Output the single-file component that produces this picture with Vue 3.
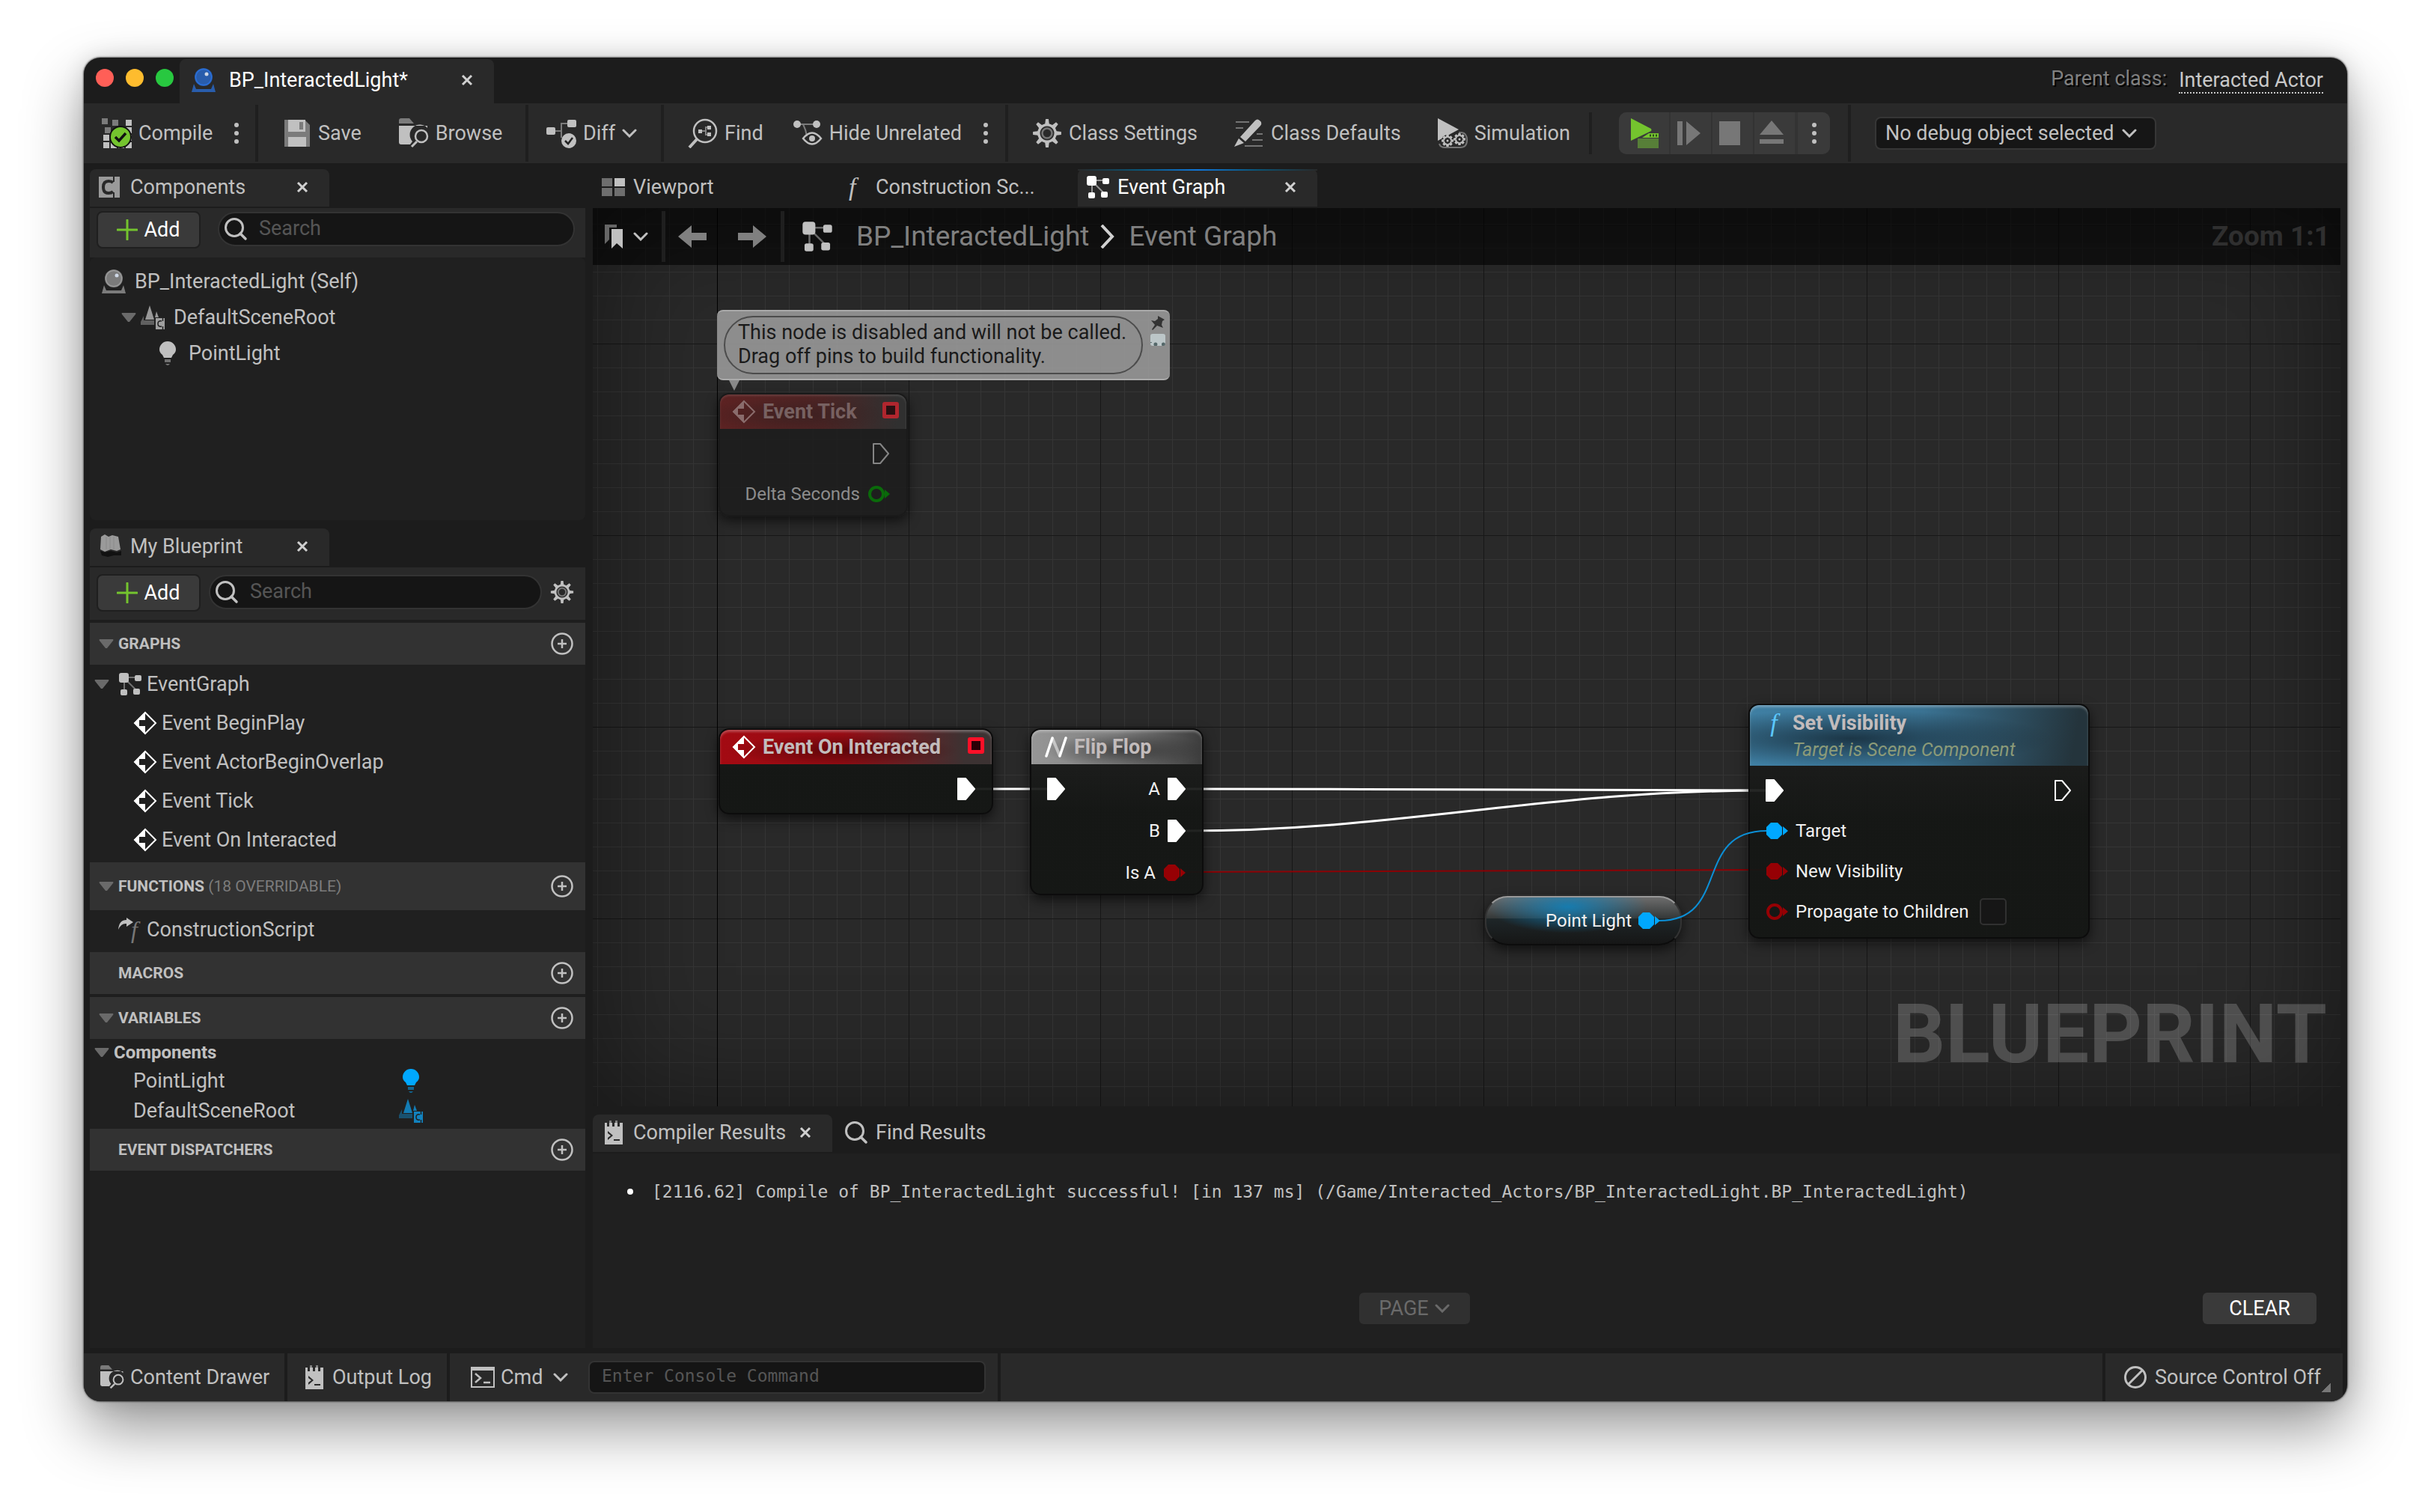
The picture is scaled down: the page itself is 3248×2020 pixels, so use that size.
<script setup>
import { ref } from 'vue'

const gear = (cx, cy, outer, inner, teeth) => {
  const step = (Math.PI * 2) / teeth
  const at = (r, a) => `${(cx + r * Math.sin(a)).toFixed(2)} ${(cy - r * Math.cos(a)).toFixed(2)}`
  let d = ''
  for (let i = 0; i < teeth; i++) {
    const a = i * step
    d += `${i ? 'L' : 'M'}${at(inner, a - step * 0.27)}L${at(outer, a - step * 0.13)}L${at(outer, a + step * 0.13)}L${at(inner, a + step * 0.27)}`
  }
  return d + 'Z'
}
const bigGear = gear(20, 20, 19, 13, 8)
const miniGear = gear(0, 0, 7, 5, 8)

const events = ['Event BeginPlay', 'Event ActorBeginOverlap', 'Event Tick', 'Event On Interacted']
const variables = [
  { name: 'PointLight', icon: 'bulb', tone: 'bright' },
  { name: 'DefaultSceneRoot', icon: 'scene', tone: 'deep' },
]
const propagate = ref(false)
const message =
  '[2116.62] Compile of BP_InteractedLight successful! [in 137 ms] (/Game/Interacted_Actors/BP_InteractedLight.BP_InteractedLight)'
</script>

<template>
  <div class="desktop">
    <svg class="defs" aria-hidden="true">
      <symbol id="actor" viewBox="0 0 32 32">
        <path d="M3 21 0 32H32L29 21L26 28H6Z" opacity=".75" />
        <circle cx="16" cy="12" r="12" opacity=".75" />
        <circle cx="16" cy="12" r="10.5" fill="none" stroke="currentColor" stroke-width="1.5" />
        <circle cx="20" cy="8" r="2.5" class="spark" />
      </symbol>
      <symbol id="close" viewBox="0 0 16 16">
        <path d="M2 2 14 14M14 2 2 14" fill="none" stroke="currentColor" stroke-width="3" />
      </symbol>
      <symbol id="chevron" viewBox="0 0 20 12">
        <path d="M2 2 10 10 18 2" fill="none" stroke="currentColor" stroke-width="3" stroke-linecap="round" />
      </symbol>
      <symbol id="dots" viewBox="0 0 8 32">
        <circle cx="4" cy="5" r="3" /><circle cx="4" cy="16" r="3" /><circle cx="4" cy="27" r="3" />
      </symbol>
      <symbol id="compile" viewBox="0 0 40 40">
        <path d="M0 0h8v8H0zM14 2h8v8h-8zM4 12h8v8H4z" opacity=".55" />
        <path d="M32 2h8v8h-8zM32 12h8v8h-8zM2 22h8v8H2zM2 32h8v8H2zM12 32h8v8h-8zM22 32h8v8h-8zM32 32h8v8h-8zM32 22h8v8h-8z" />
        <circle cx="25" cy="25" r="14" fill="#74c42e" stroke="#111" stroke-width="2" />
        <path d="M18 25 23 30 32 20" fill="none" stroke="#111" stroke-width="3.5" />
      </symbol>
      <symbol id="save" viewBox="0 0 40 40">
        <path d="M4 2H31L38 9V38H4Z" opacity=".55" />
        <path fill-rule="evenodd" d="M9 2H32V18H9ZM24 5V15H29V5Z" />
        <path d="M9 25H33V38H9Z" />
      </symbol>
      <symbol id="browse" viewBox="0 0 40 40">
        <path d="M0 7V3Q0 0 3 0H14L20 7Z" opacity=".55" />
        <path d="M0 10H38V13A13 13 0 0 0 18 31L15 35H3Q0 35 0 32Z" />
        <circle cx="30" cy="24" r="8" fill="none" stroke="currentColor" stroke-width="2.5" />
        <path d="M24 31 17 38" stroke="currentColor" stroke-width="3" />
      </symbol>
      <symbol id="diff" viewBox="0 0 40 40">
        <path d="M10 17H20M30 7H20V26" fill="none" stroke="currentColor" stroke-width="2" opacity=".55" />
        <rect y="12" width="12" height="10" rx="2" /><rect x="28" y="2" width="12" height="10" rx="2" />
        <circle cx="30" cy="30" r="10" />
        <path d="M25 30 29 34 35 26" fill="none" stroke="#222" stroke-width="2.5" />
      </symbol>
      <symbol id="findnode" viewBox="0 0 40 40">
        <circle cx="23" cy="17" r="15" fill="none" stroke="currentColor" stroke-width="2.5" />
        <path d="M13 27 2 39" stroke="currentColor" stroke-width="4" />
        <path d="M18 17H24M30 12H24V22H30" fill="none" stroke="currentColor" stroke-width="2" opacity=".6" />
        <path d="M14 15h5v5h-5zM26 10h5v5h-5zM26 19h5v5h-5z" />
      </symbol>
      <symbol id="hide" viewBox="0 0 40 40">
        <path d="M6 8H32M14 8Q18 16 19 24" fill="none" stroke="currentColor" stroke-width="2" opacity=".55" />
        <circle cx="6" cy="8" r="5" /><circle cx="32" cy="8" r="5" />
        <path d="M14 27Q26 12 38 27Q26 42 14 27Z" fill="none" stroke="currentColor" stroke-width="2.5" />
        <circle cx="26" cy="27" r="4" />
      </symbol>
      <symbol id="gear" viewBox="0 0 40 40">
        <path fill-rule="evenodd" :d="bigGear + 'M20 10.5a9.5 9.5 0 1 0 .01 0Z'" />
        <circle cx="20" cy="20" r="6.5" fill="none" stroke="currentColor" stroke-width="2.5" opacity=".5" />
      </symbol>
      <symbol id="defaults" viewBox="0 0 40 40">
        <path d="M2 5H20M2 13H12M30 21H38M24 29H38M14 37H38" fill="none" stroke="currentColor" stroke-width="2" opacity=".5" />
        <path d="M28 3Q31 0 34 3L36 5Q37 8 35 10L15 31L8 25Z" />
        <path d="M6 27 13 33 0 38Z" />
      </symbol>
      <symbol id="simulate" viewBox="0 0 40 40">
        <path d="M0 0 28 15 0 30Z" />
        <path d="M28 19H32Q39 20 39 29Q39 39 30 39H10Q3 39 2 34" fill="none" stroke="currentColor" stroke-width="2" opacity=".5" />
        <circle cx="13" cy="30" r="8" fill="#292929" /><circle cx="29" cy="28" r="8" fill="#292929" />
        <g fill="none" stroke="currentColor" stroke-width="2">
          <path :d="miniGear" transform="translate(13 30)" /><path :d="miniGear" transform="translate(29 28)" />
        </g>
        <circle cx="13" cy="30" r="1.5" /><circle cx="29" cy="28" r="1.5" />
      </symbol>
      <symbol id="play" viewBox="0 0 40 40">
        <path d="M11 27H39V40H11Z" fill="#577f38" />
        <path d="M17 26 26 20H39V26Z" fill="#74c42e" />
        <path d="M27 23H37" stroke="#2c4a1a" stroke-width="3" stroke-dasharray="2 2" />
        <path d="M2 0 29 14 Q30 16 29 17L2 30Z" fill="#74c42e" />
      </symbol>
      <symbol id="skip" viewBox="0 0 40 40"><path d="M6 4h7v32H6zM18 4 37 20 18 36Z" /></symbol>
      <symbol id="stop" viewBox="0 0 40 40"><path d="M6 4h28v32H6z" /></symbol>
      <symbol id="eject" viewBox="0 0 40 40"><path d="M20 3 36 22H4ZM4 28h32v6H4z" /></symbol>
      <symbol id="comp" viewBox="0 0 28 28">
        <path fill-rule="evenodd" opacity=".75" d="M0 0H28V28H0ZM19 0V7H21V0ZM19 21V28H21V21Z" />
        <path d="M19 8Q17 6 13 6Q6 6 6 14T13 22Q17 22 19 20" fill="none" stroke="#292929" stroke-width="4" />
      </symbol>
      <symbol id="plus" viewBox="0 0 28 28">
        <path d="M14 1V27M1 14H27" stroke="currentColor" stroke-width="3" stroke-linecap="round" />
      </symbol>
      <symbol id="search" viewBox="0 0 32 32">
        <circle cx="14" cy="14" r="11.5" fill="none" stroke="currentColor" stroke-width="3" />
        <path d="M22 22 29 29" stroke="currentColor" stroke-width="3.5" stroke-linecap="round" />
      </symbol>
      <symbol id="arrow" viewBox="0 0 20 12"><path d="M1 0H19Q20 1 19 2L11 12H9L1 2Q0 1 1 0Z" /></symbol>
      <symbol id="scene" viewBox="0 0 32 32">
        <path d="M12 0 18 19H6ZM21 8 24 16H19Z" opacity=".75" />
        <path d="M4 14V20H18V26H0V22Z" opacity=".4" />
        <path d="M20 17H32V32H20Z" opacity=".8" />
        <path d="M28 21Q23 20 23 24.500T28 28M29.500 17V21M29.500 28V32" fill="none" stroke="#202020" stroke-width="1.5" />
      </symbol>
      <symbol id="bulb" viewBox="0 0 32 32">
        <path d="M16 0a11 11 0 0 1 11 11q0 4-4 7l-2 4H11l-2-4q-4-3-4-7A11 11 0 0 1 16 0Z" />
        <path d="M12 24H20V28H12ZM13 30H19L17 32H15Z" opacity=".5" />
      </symbol>
      <symbol id="book" viewBox="0 0 32 32">
        <path d="M3 3 8 0 13 3 18 1 26 3 29 20 24 22 16 20 8 23 2 20Z" opacity=".75" />
        <path d="M10 3V20M15 3V20M20 3V20" stroke="#8a8a8a" stroke-width="1" />
        <path d="M2 22 8 24 16 22 24 24 30 22V28H20L12 30L4 28Z" fill="#111" />
      </symbol>
      <symbol id="graph" viewBox="0 0 32 32">
        <path d="M8 7H26M8 10V27M10 10 25 25" fill="none" stroke="currentColor" stroke-width="2" opacity=".5" />
        <rect x="1" y="1" width="13" height="13" rx="3" /><rect x="22" y="4" width="9" height="8" rx="2" />
        <rect x="3" y="23" width="9" height="8" rx="2" /><rect x="20" y="22" width="9" height="8" rx="2" />
      </symbol>
      <symbol id="event" viewBox="0 0 32 32">
        <path d="M16 2 30 16 16 30 2 16Z" fill="none" stroke="currentColor" stroke-width="2" />
        <path d="M16 1V12H8V20H16V31L1 16Z" />
      </symbol>
      <symbol id="circleplus" viewBox="0 0 32 32">
        <circle cx="16" cy="16" r="13.5" fill="none" stroke="currentColor" stroke-width="2.5" />
        <path d="M16 10V22M10 16H22" stroke="currentColor" stroke-width="2.5" />
      </symbol>
      <symbol id="redo" viewBox="0 0 20 16">
        <path d="M0 16Q1 3 11 3V0L20 6 11 12V8Q4 7 0 16Z" />
      </symbol>
      <symbol id="tiles" viewBox="0 0 32 24">
        <path d="M0 0h14v11H0zM0 13h14v11H0zM17 13h14v11H17z" opacity=".5" /><path d="M17 0h14v11H17z" />
      </symbol>
      <symbol id="marks" viewBox="0 0 24 32">
        <path d="M0 0H16V4H6V20L0 26Z" opacity=".5" /><path d="M9 6H24V32L16 25 9 32Z" />
      </symbol>
      <symbol id="back" viewBox="0 0 40 32"><path d="M0 16 18 1V11H38V21H18V31Z" /></symbol>
      <symbol id="log" viewBox="0 0 32 32">
        <path fill-rule="evenodd" d="M4 3H7V8H10V3H14V8H17V3H21V8H24V3H28V32H4ZM8 14V17L12 20 8 23V26L15 20ZM16 25V27H24V25Z" />
        <path d="M10 0h3v6h-3zM18 0h3v6h-3z" opacity=".6" />
      </symbol>
      <symbol id="term" viewBox="0 0 32 28">
        <path fill-rule="evenodd" d="M0 0H32V28H0ZM2 5V26H30V5Z" />
        <path d="M6 9 13 15 6 21M17 21H26" fill="none" stroke="currentColor" stroke-width="2.5" />
      </symbol>
      <symbol id="off" viewBox="0 0 32 32">
        <circle cx="16" cy="16" r="13.5" fill="none" stroke="currentColor" stroke-width="3" />
        <path d="M7 25 25 7" stroke="currentColor" stroke-width="3" />
      </symbol>
      <symbol id="exec" viewBox="0 0 24 30">
        <path d="M1 1H11L23 15 11 29H1Z" stroke="currentColor" stroke-width="2" stroke-linejoin="round" />
      </symbol>
      <symbol id="execopen" viewBox="0 0 24 30">
        <path d="M2 2H11L22 15 11 28H2Z" fill="none" stroke="currentColor" stroke-width="2" stroke-linejoin="round" />
      </symbol>
      <symbol id="pin" viewBox="0 0 30 24">
        <path d="M7 1H16L22 7V17L16 23H7L1 17V7Z" /><path d="M23 6 30 12 23 18Z" />
      </symbol>
      <symbol id="pinopen" viewBox="0 0 30 24">
        <circle cx="12" cy="12" r="9" fill="none" stroke="currentColor" stroke-width="4" /><path d="M23 6 30 12 23 18Z" />
      </symbol>
      <symbol id="flip" viewBox="0 0 30 28">
        <path d="M10 2 20 26" stroke="currentColor" stroke-width="4" opacity=".5" />
        <path d="M10 2 2 26M28 2 20 26" stroke="currentColor" stroke-width="3.5" stroke-linecap="round" />
      </symbol>
      <symbol id="tack" viewBox="0 0 20 20">
        <path d="M10 0 19 5 16 7 15 12 17 16 9 13 3 19 2 18 6 12 1 6 6 7 10 4Z" />
      </symbol>
    </svg>

    <main class="window">
      <header class="titlebar">
        <div class="lights">
          <button class="light red" aria-label="Close window"></button>
          <button class="light amber" aria-label="Minimise window"></button>
          <button class="light green" aria-label="Zoom window"></button>
        </div>
        <div class="doctab">
          <svg class="i32 actor-blue"><use href="#actor" /></svg>
          <span class="grow">BP_InteractedLight*</span>
          <button class="x" aria-label="Close BP_InteractedLight"><svg><use href="#close" /></svg></button>
        </div>
        <p class="parent"><span>Parent class:</span><a href="#">Interacted Actor</a></p>
      </header>

      <nav class="toolbar" aria-label="Blueprint">
        <div class="group g1">
          <button class="tool"><svg class="i40"><use href="#compile" /></svg>Compile</button>
          <button class="more" aria-label="Compile options"><svg class="dots"><use href="#dots" /></svg></button>
        </div>
        <div class="group g2">
          <button class="tool"><svg class="i40"><use href="#save" /></svg>Save</button>
          <button class="tool"><svg class="i40"><use href="#browse" /></svg>Browse</button>
        </div>
        <div class="group g3">
          <button class="tool"><svg class="i40"><use href="#diff" /></svg>Diff<svg class="chev"><use href="#chevron" /></svg></button>
        </div>
        <div class="group g4">
          <button class="tool"><svg class="i40"><use href="#findnode" /></svg>Find</button>
          <button class="tool"><svg class="i40"><use href="#hide" /></svg>Hide Unrelated</button>
          <button class="more" aria-label="Hide options"><svg class="dots"><use href="#dots" /></svg></button>
        </div>
        <div class="group g5">
          <button class="tool"><svg class="i40"><use href="#gear" /></svg>Class Settings</button>
          <button class="tool"><svg class="i40"><use href="#defaults" /></svg>Class Defaults</button>
          <button class="tool"><svg class="i40"><use href="#simulate" /></svg>Simulation</button>
        </div>
        <div class="group g6">
          <div class="player">
            <button class="wide" aria-label="Play"><svg class="i40"><use href="#play" /></svg></button>
            <button aria-label="Skip"><svg class="i40"><use href="#skip" /></svg></button>
            <button aria-label="Stop"><svg class="i40"><use href="#stop" /></svg></button>
            <button aria-label="Eject"><svg class="i40"><use href="#eject" /></svg></button>
            <button class="last" aria-label="Play options"><svg class="dots"><use href="#dots" /></svg></button>
          </div>
        </div>
        <div class="debug">
          <select aria-label="Debug object"><option>No debug object selected</option></select>
          <svg class="chev"><use href="#chevron" /></svg>
        </div>
      </nav>

      <div class="workspace">
        <aside class="side">
          <section class="dock components">
            <div class="tabs">
              <div class="tab on"><svg class="i28"><use href="#comp" /></svg><span class="grow">Components</span>
                <button class="x" aria-label="Close Components"><svg><use href="#close" /></svg></button></div>
            </div>
            <div class="bar short">
              <button class="add"><svg><use href="#plus" /></svg>Add</button>
              <label class="find indented"><svg><use href="#search" /></svg><input type="search" placeholder="Search" aria-label="Search components" /></label>
            </div>
            <ul class="tree">
              <li><svg class="i32 dim"><use href="#actor" /></svg>BP_InteractedLight (Self)</li>
              <li class="l1"><svg class="tri"><use href="#arrow" /></svg><svg class="i32"><use href="#scene" /></svg>DefaultSceneRoot</li>
              <li class="l2"><svg class="i32"><use href="#bulb" /></svg>PointLight</li>
            </ul>
          </section>

          <section class="dock blueprint">
            <div class="tabs">
              <div class="tab on"><svg class="i32"><use href="#book" /></svg><span class="grow">My Blueprint</span>
                <button class="x" aria-label="Close My Blueprint"><svg><use href="#close" /></svg></button></div>
            </div>
            <div class="bar tall">
              <button class="add"><svg><use href="#plus" /></svg>Add</button>
              <label class="find"><svg><use href="#search" /></svg><input type="search" placeholder="Search" aria-label="Search blueprint" /></label>
              <button class="round" aria-label="Settings"><svg class="i32"><use href="#gear" /></svg></button>
            </div>
            <div class="lists">
              <h2><svg class="tri"><use href="#arrow" /></svg>GRAPHS<button class="round" aria-label="Add graph"><svg class="i32"><use href="#circleplus" /></svg></button></h2>
              <ul class="rows">
                <li class="parentrow"><svg class="tri"><use href="#arrow" /></svg><svg class="i32"><use href="#graph" /></svg>EventGraph</li>
                <li v-for="e in events" :key="e" class="child"><svg class="i32 white"><use href="#event" /></svg>{{ e }}</li>
              </ul>
              <h2 class="high"><svg class="tri"><use href="#arrow" /></svg>FUNCTIONS <small>(18 OVERRIDABLE)</small><button class="round" aria-label="Add function"><svg class="i32"><use href="#circleplus" /></svg></button></h2>
              <ul class="rows">
                <li class="script"><span class="ovr"><svg><use href="#redo" /></svg><i>f</i></span>ConstructionScript</li>
              </ul>
              <h2 class="split"><span class="tri"></span>MACROS<button class="round" aria-label="Add macro"><svg class="i32"><use href="#circleplus" /></svg></button></h2>
              <h2><svg class="tri"><use href="#arrow" /></svg>VARIABLES<button class="round" aria-label="Add variable"><svg class="i32"><use href="#circleplus" /></svg></button></h2>
              <ul class="vars">
                <li class="cat"><svg class="tri"><use href="#arrow" /></svg>Components</li>
                <li v-for="v in variables" :key="v.name"><span class="vname">{{ v.name }}</span><svg class="i32" :class="v.tone"><use :href="'#' + v.icon" /></svg></li>
              </ul>
              <h2><span class="tri"></span>EVENT DISPATCHERS<button class="round" aria-label="Add dispatcher"><svg class="i32"><use href="#circleplus" /></svg></button></h2>
            </div>
          </section>
        </aside>

        <div class="center">
          <section class="dock editor">
            <div class="tabs">
              <div class="tab"><svg class="tiles"><use href="#tiles" /></svg><span>Viewport</span></div>
              <div class="tab"><i class="fx">f</i><span>Construction Sc...</span></div>
              <div class="tab on active"><svg class="i32"><use href="#graph" /></svg><span class="grow">Event Graph</span>
                <button class="x" aria-label="Close Event Graph"><svg><use href="#close" /></svg></button></div>
            </div>
            <div class="canvas">
              <div class="origin"></div>
              <div class="vignette"></div>
              <div class="crumbs">
                <button class="marks" aria-label="Bookmarks"><svg class="mk"><use href="#marks" /></svg><svg class="chev"><use href="#chevron" /></svg></button>
                <div class="history">
                  <button aria-label="Back"><svg><use href="#back" /></svg></button>
                  <button aria-label="Forward"><svg class="mirror"><use href="#back" /></svg></button>
                </div>
                <svg class="gicon"><use href="#graph" /></svg>
                <a href="#">BP_InteractedLight</a>
                <svg class="gt" viewBox="0 0 24 32"><path d="M4 1 18 16 4 31" fill="none" stroke="currentColor" stroke-width="4" /></svg>
                <span class="grow">Event Graph</span>
                <strong>Zoom 1:1</strong>
              </div>
              <div class="watermark">BLUEPRINT</div>

              <svg class="wires" aria-hidden="true">
                <g fill="none" stroke="#fff" stroke-width="3">
                  <path d="M510 776H608" />
                  <path d="M792 776C1050 776 1300 778 1568 778" />
                  <path d="M792 832C1080 832 1270 778 1568 778" />
                </g>
                <path d="M790 887 1568 884" stroke="#8b0004" stroke-width="2" />
              </svg>

              <div class="bubble"><p>This node is disabled and will not be called.<br />Drag off pins to build functionality.</p>
                <div class="tools"><svg><use href="#tack" /></svg><span></span></div></div>

              <article class="node tick">
                <h3><svg class="i32"><use href="#event" /></svg>Event Tick<i class="sq"></i></h3>
                <div class="pins"><div class="row end"><svg class="exec"><use href="#execopen" /></svg></div>
                  <div class="row end">Delta Seconds<svg class="pin grn"><use href="#pinopen" /></svg></div></div>
              </article>

              <article class="node interacted">
                <h3><svg class="i32"><use href="#event" /></svg>Event On Interacted<i class="sq"></i></h3>
                <div class="pins"><div class="row end"><svg class="exec"><use href="#exec" /></svg></div></div>
              </article>

              <article class="node flipflop">
                <h3><svg class="flip"><use href="#flip" /></svg>Flip Flop</h3>
                <div class="pins">
                  <div class="row"><svg class="exec"><use href="#exec" /></svg><span class="grow"></span>A<svg class="exec"><use href="#exec" /></svg></div>
                  <div class="row end">B<svg class="exec"><use href="#exec" /></svg></div>
                  <div class="row end">Is A<svg class="pin rd"><use href="#pin" /></svg></div>
                </div>
              </article>

              <article class="node visibility">
                <h3><i class="fx">f</i><span>Set Visibility<em>Target is Scene Component</em></span></h3>
                <div class="pins">
                  <div class="row"><svg class="exec"><use href="#exec" /></svg><span class="grow"></span><svg class="exec"><use href="#execopen" /></svg></div>
                  <div class="row"><svg class="pin bl"><use href="#pin" /></svg>Target</div>
                  <div class="row"><svg class="pin rd"><use href="#pin" /></svg>New Visibility</div>
                  <label class="row"><svg class="pin rd"><use href="#pinopen" /></svg>Propagate to Children<input v-model="propagate" type="checkbox" /></label>
                </div>
              </article>

              <article class="node pointlight">Point Light<svg class="pin bl"><use href="#pin" /></svg></article>
              <svg class="wires" aria-hidden="true">
                <path d="M1425 952C1520 952 1470 832 1568 832" fill="none" stroke="#0c8fd6" stroke-width="2" />
              </svg>
            </div>
          </section>

          <section class="dock results">
            <div class="tabs">
              <div class="tab on"><svg class="i32"><use href="#log" /></svg><span class="grow">Compiler Results</span>
                <button class="x" aria-label="Close Compiler Results"><svg><use href="#close" /></svg></button></div>
              <div class="tab"><svg class="i32"><use href="#search" /></svg><span>Find Results</span></div>
            </div>
            <div class="output">
              <ul><li>{{ message }}</li></ul>
              <div class="actions">
                <button class="page" disabled>PAGE<svg class="chev"><use href="#chevron" /></svg></button>
                <button class="clear">CLEAR</button>
              </div>
            </div>
          </section>
        </div>
      </div>

      <footer class="status">
        <button class="s1"><svg class="i32"><use href="#browse" /></svg>Content Drawer</button>
        <button class="s2"><svg class="i32"><use href="#log" /></svg>Output Log</button>
        <div class="s3">
          <button><svg class="i32 term"><use href="#term" /></svg>Cmd<svg class="chev"><use href="#chevron" /></svg></button>
          <input type="text" placeholder="Enter Console Command" aria-label="Console command" />
        </div>
        <div class="spacer"></div>
        <button class="s4"><svg class="i32"><use href="#off" /></svg>Source Control Off<span class="grip"></span></button>
      </footer>
    </main>
  </div>
</template>

<style>
body { background: #fff; }
</style>

<style scoped>
* { box-sizing: border-box; margin: 0; }
.desktop {
  min-height: 100vh; display: flex; padding: 77px 112px 148px; background: #fff; overflow: hidden;
  font-family: Roboto, "Liberation Sans", sans-serif; font-size: 27px; line-height: 32px; color: #c0c0c0;
}
.defs { position: absolute; width: 0; height: 0; }
svg { fill: currentColor; flex: none; display: block; }
ul { list-style: none; padding: 0; }
button { font: inherit; color: inherit; background: none; border: 0; padding: 0; display: flex; align-items: center; white-space: nowrap; }
input, select { font: inherit; color: inherit; }
.grow { flex: 1; }
.i40 { width: 40px; height: 40px; }
.i32 { width: 32px; height: 32px; }
.i28 { width: 28px; height: 28px; margin-right: 4px; }
.chev { width: 20px; height: 12px; }
.dots { width: 8px; height: 32px; }
.white { color: #fff; }
.dim { color: #999; }

.window {
  flex: 1; min-width: 0; display: flex; flex-direction: column; background: #1c1c1c; border-radius: 22px; overflow: hidden;
  box-shadow: 0 0 2px 1px rgba(0, 0, 0, .5), 0 36px 80px rgba(0, 0, 0, .42), 0 0 30px rgba(0, 0, 0, .12);
}
.titlebar { display: flex; height: 61px; padding-top: 2px; }
.lights { display: flex; gap: 16px; width: 128px; padding: 13px 0 0 16px; }
.light { width: 24px; height: 24px; border-radius: 50%; }
.red { background: #ff5f57; }
.amber { background: #febc2e; }
.green { background: #28c840; }
.doctab { width: 420px; display: flex; align-items: center; padding: 0 28px 4px 16px; gap: 18px; background: #292929; border-radius: 8px 8px 0 0; color: #fff; }
.actor-blue { color: #2a6fd8; }
.spark { fill: #cfd8e6; }
.x { color: #d0d0d0; }
.x svg { width: 16px; height: 16px; }
.parent { margin-left: auto; display: flex; gap: 16px; padding: 10px 32px 0 0; color: #808080; }
.parent span { text-shadow: 2px 2px 1px #000; }
.parent a { color: #c8c8c8; text-decoration: none; border-bottom: 2px dotted #c8c8c8; height: 36px; padding-top: 2px; }

.toolbar { display: flex; height: 80px; background: #292929; }
.group { display: flex; align-items: center; border-right: 4px solid #1f1f1f; margin: 2px 0; }
.tool { gap: 9px; height: 76px; }
.more { height: 76px; }
.g1 { width: 233px; padding-left: 24px; }
.g1 .more { margin-left: 28px; }
.g2 { width: 361px; padding-left: 31px; gap: 50px; }
.g3 { width: 181px; padding-left: 24px; }
.g4 { width: 460px; padding-left: 32px; }
.g4 .tool + .tool { margin-left: 39px; }
.g4 .more { margin-left: 28px; }
.g5 { width: 780px; padding-left: 32px; gap: 49px; margin: 12px 0; }
.g5 .tool { height: 56px; }
.g6 { width: 346px; padding-left: 36px; }
.player { display: flex; gap: 2px; height: 56px; border-radius: 10px; overflow: hidden; background: #333; color: #777; }
.player button { width: 54px; padding-right: 8px; background: #3a3a3a; justify-content: center; }
.player .wide { width: 67px; padding-right: 0; }
.player .last { width: 43px; margin-left: 2px; padding-right: 0; color: #c0c0c0; }
.debug { position: relative; align-self: center; margin-left: 32px; width: 376px; height: 44px; }
.debug select { appearance: none; width: 100%; height: 44px; padding: 0 12px; background: #161616; border: 2px solid #363636; border-radius: 8px; }
.debug .chev { position: absolute; right: 26px; top: 16px; }

.workspace { flex: 1; min-height: 0; display: grid; grid-template-columns: 662px minmax(0, 1fr); gap: 10px; padding: 8px 9px 7px 8px; }
.side, .center { display: flex; flex-direction: column; gap: 11px; min-height: 0; }
.dock { display: flex; flex-direction: column; flex-basis: 0; }
.components { flex-grow: 469; }
.blueprint { flex-grow: 1095; }
.editor { flex-grow: 1251; }
.results { flex-grow: 312; }
.tabs { display: flex; gap: 4px; height: 52px; }
.tab { position: relative; width: 320px; height: 50px; display: flex; align-items: center; gap: 10px; padding: 0 28px 2px 12px; border-radius: 8px 8px 0 0; white-space: nowrap; }
.tab.on { background: #292929; }
.tab.active { color: #fff; padding-left: 11px; border-top: 2px solid; border-image: linear-gradient(90deg, #292929, #0b5475 25%, #1176d8 50%, #0b5475 75%, #292929) 1; padding-bottom: 4px; }
.tiles { width: 32px; height: 24px; }
.fx { font-family: "Liberation Serif", serif; font-size: 34px; width: 32px; text-align: center; }
.tab .fx { text-align: left; padding-left: 6px; }
.bar { display: flex; align-items: flex-start; background: #292929; padding: 4px 14px 0 9px; }
.bar.short { height: 66px; }
.bar.tall { height: 74px; padding-top: 9px; border-bottom: 4px solid #1e1e1e; }
.add { width: 139px; height: 50px; border-radius: 8px; background: #3a3a3a; color: #fff; justify-content: center; gap: 8px; border: 2px solid #1f1f1f; }
.add svg { width: 28px; height: 28px; color: #74c42e; }
.find { flex: 1; display: flex; align-items: center; gap: 15px; height: 46px; margin: 1px 0 0 11px; padding: 0 18px 0 6px; background: #151515; border: 2px solid #333; border-radius: 23px; }
.find.indented { margin-left: 23px; }
.find svg { width: 32px; height: 32px; }
.find input { flex: 1; min-width: 0; background: none; border: 0; padding: 0 0 2px; outline: 0; }
input::placeholder { color: #555; opacity: 1; }
.tall .round { margin: 8px 1px 0 11px; }
.tree { flex: 1; background: #202020; border-radius: 8px; padding-top: 8px; }
.tree li { display: flex; align-items: center; height: 48px; padding-left: 16px; gap: 12px; }
.tree .l1 { padding-left: 42px; gap: 6px; }
.tree .l1 .i32 { margin-right: 6px; }
.tree .l2 { padding-left: 88px; }
.tri { width: 20px; height: 12px; color: #6a6a6a; flex: none; }
.lists { flex: 1; background: #202020; }
h2 { display: flex; align-items: center; height: 56px; padding: 0 15px 0 12px; background: #323232; font-size: 21px; font-weight: 700; color: #c0c0c0; white-space: pre; }
h2 .tri { margin-right: 6px; }
h2 small { font-size: 21px; font-weight: 400; color: #7c7c7c; }
h2 .round { margin-left: auto; }
h2.high { height: 64px; }
h2.split { height: 60px; border-bottom: 4px solid #1e1e1e; }
.rows { padding-bottom: 4px; }
.rows li { display: flex; align-items: center; height: 52px; gap: 6px; padding-left: 58px; }
.rows .parentrow { padding-left: 6px; }
.parentrow .tri { margin-right: 6px; }
.rows .script { padding-left: 38px; }
.ovr { position: relative; width: 32px; height: 32px; display: block; }
.ovr svg { width: 20px; height: 16px; }
.ovr i { position: absolute; right: 6px; top: 0; font-family: "Liberation Serif", serif; font-size: 32px; color: #777; }
.vars { padding-bottom: 4px; }
.vars li { display: flex; align-items: center; height: 40px; padding-left: 58px; }
.vars .cat { height: 36px; padding-left: 6px; gap: 6px; font-weight: 700; font-size: 24px; }
.vname { width: 355px; }
.bright { color: #00a8ff; }
.deep { color: #0f9be6; }

.canvas {
  position: relative; flex: 1; overflow: hidden; background-color: #292929;
  background-image: linear-gradient(#171717 1px, transparent 1px), linear-gradient(90deg, #171717 1px, transparent 1px),
    linear-gradient(#353535 1px, transparent 1px), linear-gradient(90deg, #353535 1px, transparent 1px);
  background-size: 256px 256px, 256px 256px, 32px 32px, 32px 32px;
  background-position: 166px 181px, 166px 181px, 166px 181px, 166px 181px;
}
.origin { position: absolute; left: 166px; top: 0; bottom: 0; width: 1px; background: #000; }
.vignette { position: absolute; inset: 0; box-shadow: inset 0 0 160px rgba(0, 0, 0, .45); }
.crumbs { position: relative; display: flex; align-items: center; height: 76px; background: rgba(0, 0, 0, .58); padding: 0 14px 0 16px; font-size: 37px; line-height: 44px; color: #808080; }
.crumbs a { color: inherit; text-decoration: none; }
.marks { height: 68px; width: 81px; gap: 14px; border-right: 5px solid #1f1f1f; color: #c0c0c0; }
.mk { width: 24px; height: 32px; }
.history { display: flex; gap: 38px; height: 68px; width: 159px; padding-left: 17px; border-right: 5px solid #1f1f1f; }
.history svg { width: 40px; height: 32px; }
.mirror { transform: scaleX(-1); }
.gicon { width: 48px; height: 42px; margin: 0 28px 0 20px; color: #c0c0c0; }
.gt { width: 24px; height: 32px; margin: 0 16px 0 13px; color: #d0d0d0; }
.crumbs strong { color: #2f2f2f; }
.watermark { position: absolute; right: 18px; bottom: 24px; font-weight: 700; font-size: 110px; line-height: 144px; color: rgba(255, 255, 255, .19); }
.wires { position: absolute; left: 0; top: 0; width: 100%; height: 100%; }

.bubble { position: absolute; left: 166px; top: 136px; width: 605px; height: 94px; display: flex; padding: 6px 6px 8px 9px; gap: 10px; background: rgba(158, 158, 158, .86); border: solid #aaa; border-width: 2px 0; border-radius: 8px; color: #1a1a1a; }
.bubble p { width: 560px; height: 78px; padding: 4px 0 0 17px; border: 2px solid #4c4c4c; border-radius: 39px; white-space: nowrap; }
.bubble::after { content: ""; position: absolute; left: 16px; top: 92px; border: 7px solid transparent; border-top: 14px solid #8a8a8a; border-bottom: 0; }
.tools svg { width: 20px; height: 20px; color: #333; }
.tools span { display: block; width: 20px; height: 16px; margin-top: 4px; border-radius: 3px; background: #bcc6c8; border-bottom: 5px dotted #55686a; }

.node { position: absolute; border-radius: 14px; border: 2px solid #0c0c0c; background: linear-gradient(rgba(32, 32, 32, .93), rgba(20, 22, 20, .94) 50%); box-shadow: 0 6px 16px rgba(0, 0, 0, .6); color: #f0f0f0; font-size: 24px; }
.node h3 { display: flex; align-items: center; height: 46px; border-radius: 12px 12px 0 0; font-size: 27px; font-weight: 700; color: #c2bcbc; white-space: nowrap; padding: 0 10px 0 16px; gap: 9px; box-shadow: inset 0 3px 3px rgba(255, 255, 255, .25); }
.node h3 > svg { color: #fff; }
.sq { width: 22px; height: 22px; margin: 0 0 4px auto; border: 5px solid #ff1028; border-radius: 3px; background: #2a0006; }
.pins { padding: 6px 22px 0 21px; }
.row { display: flex; align-items: center; gap: 10px; height: 54px; white-space: nowrap; }
.end { justify-content: flex-end; }
.exec { width: 24px; height: 30px; color: #fff; }
.pin { width: 30px; height: 24px; }
.rd { color: #960004; }
.bl { color: #00a8ff; }
.grn { color: #0a6a0a; }
.tick { left: 168px; top: 247px; width: 253px; height: 165px; background: rgba(28, 28, 28, .8); color: #8c8c8c; border-color: #1a1a1a; }
.tick h3 { background: radial-gradient(ellipse at 40% 60%, rgba(50, 30, 30, .6), transparent 60%), linear-gradient(90deg, #5c2222, #4c2424 55%, #303030 95%); color: #776161; box-shadow: inset 0 2px 3px rgba(255, 255, 255, .12); }
.tick h3 > svg { color: #8a6c6c; }
.tick .exec { color: #858585; }
.tick .sq { border-color: #b0262e; background: #2a1012; }
.interacted { left: 168px; top: 695px; width: 367px; height: 115px; }
.interacted h3 { background: radial-gradient(ellipse at 45% 60%, rgba(50, 0, 0, .55), transparent 55%), linear-gradient(90deg, #a30a12, #960c14 45%, #3c3232 90%); }
.flipflop { left: 584px; top: 695px; width: 232px; height: 223px; }
.flipflop .pins { padding-top: 5px; }
.flipflop .row { height: 56px; }
.flipflop h3 { background: radial-gradient(ellipse at 55% 60%, rgba(40, 40, 40, .7), transparent 60%), linear-gradient(90deg, #969696, #808080 50%, #3c3c3c); padding-left: 18px; }
.flip { width: 30px; height: 28px; }
.visibility { left: 1544px; top: 662px; width: 456px; height: 314px; }
.visibility h3 { height: 81px; align-items: flex-start; padding-top: 8px; line-height: 32px; background: radial-gradient(ellipse at 30% 55%, rgba(20, 38, 50, .8), transparent 60%), linear-gradient(100deg, #3f7fa3, #3a7292 50%, #24343c 95%); }
.visibility .fx { color: #5cc8ff; font-weight: 400; width: 32px; }
h3 em { display: block; font-size: 25px; font-weight: 400; color: #8b9a78; line-height: 40px; }
.visibility input { appearance: none; width: 36px; height: 36px; border: 2px solid #303030; border-radius: 5px; background: #161616; margin-left: 4px; }
.pointlight { left: 1192px; top: 919px; width: 263px; height: 66px; border-radius: 30px; display: flex; align-items: center; justify-content: flex-end; gap: 8px; padding-right: 27px; background: radial-gradient(ellipse at 42% 20%, rgba(12, 130, 190, .85), transparent 50%), linear-gradient(#6c6c6c, #343838 45%, #1e2628 46%, #161616); border: 2px solid #555; border-color: #999 #333 #0c0c0c; }

.output { flex: 1; display: flex; flex-direction: column; justify-content: space-between; background: #202020; padding: 35px 32px 32px 44px; }
.output li { display: flex; align-items: center; font-family: "DejaVu Sans Mono", monospace; font-size: 23px; white-space: pre; }
.output li::before { content: ""; width: 8px; height: 8px; margin: 0 25px 0 2px; border-radius: 50%; background: #fff; }
.actions { display: flex; align-items: center; }
.page, .clear { height: 42px; justify-content: center; border-radius: 6px; }
.page { width: 148px; gap: 8px; margin: 0 auto; background: #303030; color: #6a6a6a; }
.clear { width: 152px; background: #3a3a3a; color: #fff; }

.status { display: flex; height: 64px; gap: 4px; padding-right: 6px; }
.status > * { background: #292929; }
.s1 { width: 268px; padding-left: 22px; gap: 8px; }
.s2 { width: 213px; padding-left: 20px; gap: 8px; }
.s3 { display: flex; align-items: center; width: 732px; padding-left: 28px; }
.s3 button { width: 157px; gap: 8px; }
.s3 .chev { margin-left: 6px; }
.term { height: 28px; }
.s3 input { width: 531px; height: 44px; padding: 0 16px 4px; background: #151515; border: 2px solid #333; border-radius: 8px; font-family: "DejaVu Sans Mono", monospace; font-size: 23px; outline: 0; }
.spacer { flex: 1; }
.s4 { position: relative; width: 317px; padding-left: 24px; gap: 10px; }
.grip { position: absolute; right: 16px; bottom: 12px; width: 13px; height: 13px; background: linear-gradient(135deg, transparent 50%, #777 50%); }
</style>
